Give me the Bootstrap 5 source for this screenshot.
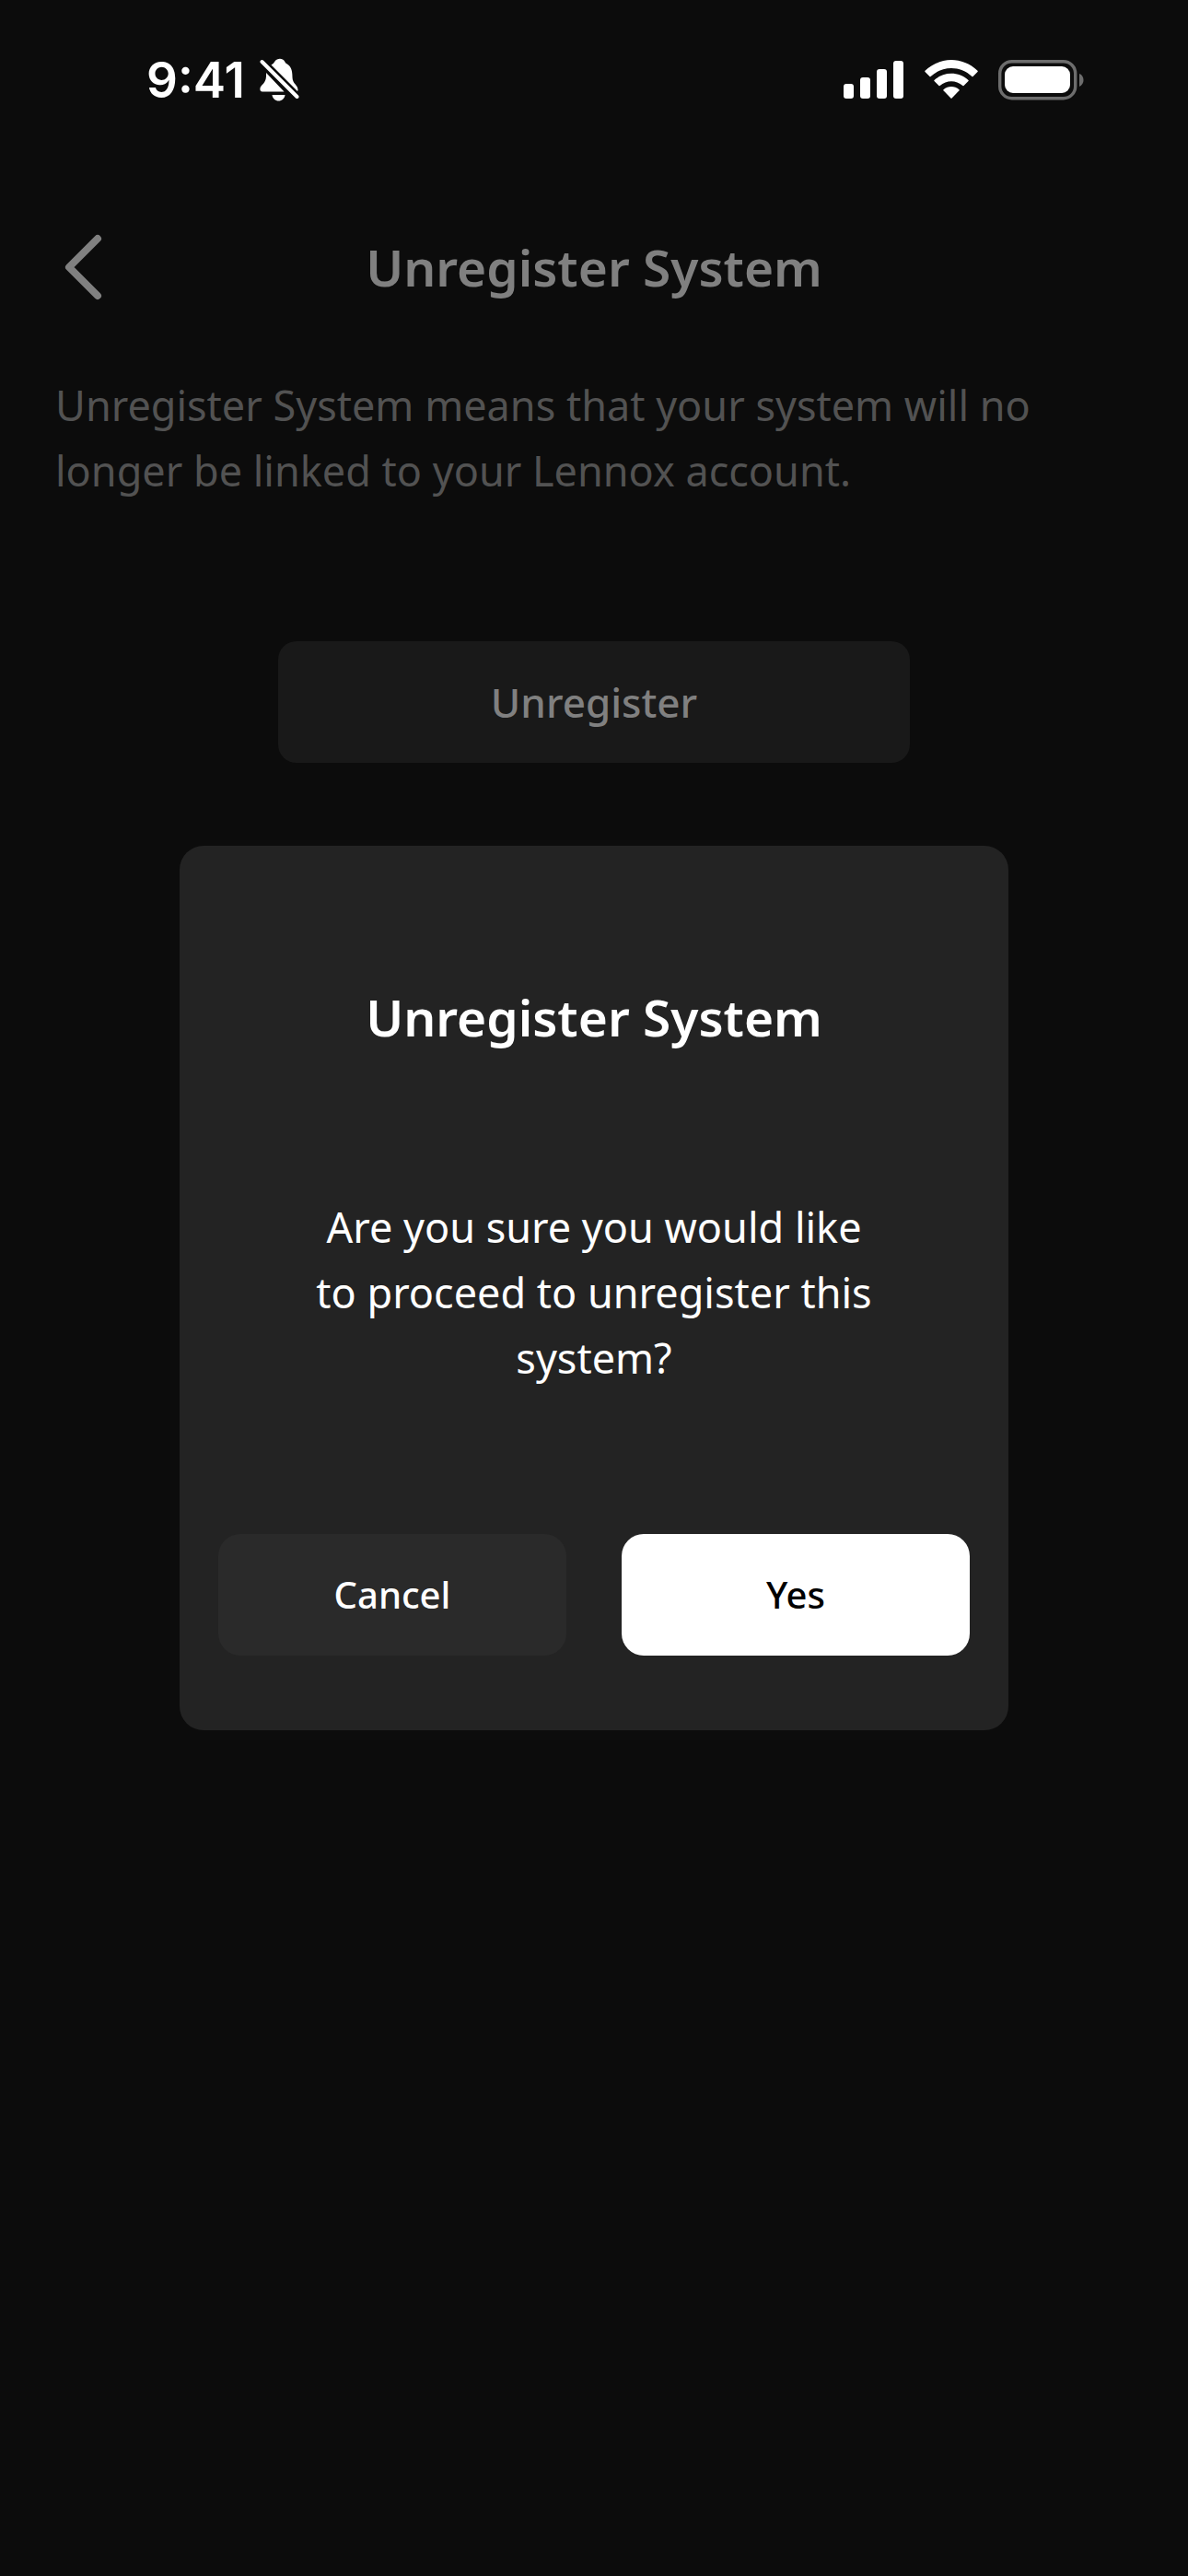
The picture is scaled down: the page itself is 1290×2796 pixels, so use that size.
<!DOCTYPE html>
<html lang="en">
<head>
<meta charset="utf-8">
<meta name="viewport" content="width=device-width, initial-scale=1">
<title>Unregister System</title>
<link href="https://cdn.jsdelivr.net/npm/bootstrap@5.3.0/dist/css/bootstrap.min.css" rel="stylesheet">
<style>
body { background: #0c0c0c; color: #fff; font-family: "Noto Sans", "Open Sans", sans-serif; }
.status-bar { padding: 54px 112px 0 159px; }
.status-time { font: 600 53px/66px Inter, sans-serif; }
.status-icons { gap: 22px; }
.top-bar { padding: 0 60px; margin-top: 110px; height: 120px; grid-template-columns: 60px 1fr 60px; align-items: center; }
.back-link { line-height: 0; padding-left: 9px; }
.screen-title { font-size: 55px; line-height: 72px; font-weight: 600; }
.dimmed { color: #808080; }
.intro { color: #525252; font-size: 45px; line-height: 71px; font-weight: 400; padding: 0 60px; margin: 54px 0 0; }
.action-btn { height: 132px; border: 0; border-radius: 24px; font-size: 40px; font-weight: 500; }
.unregister-btn { width: 686px; max-width: 90%; margin-top: 150px; border-radius: 20px; background: #191919; color: #808080; font-size: 44px; }
.confirm-dialog { max-width: 900px; margin: 0 auto; }
.confirm-panel { background: #232323; color: #fff; border: 0; border-radius: 26px; padding: 150px 42px 81px; }
.confirm-text { font-size: 45px; line-height: 71px; font-weight: 400; padding: 0 100px; margin: 156px 0 156px; }
.confirm-actions { gap: 60px; }
.cancel-btn, .cancel-btn:hover { background: #2a2a2a; color: #fff; }
.yes-btn, .yes-btn:hover { background: #fff; color: #000; }
</style>
<script src="https://cdn.jsdelivr.net/npm/bootstrap@5.3.0/dist/js/bootstrap.bundle.min.js"></script>
</head>
<body>
<header class="status-bar d-flex justify-content-between align-items-center">
  <div class="d-flex align-items-center gap-3">
    <span class="status-time">9:41</span>
    <svg width="44" height="48" viewBox="0 0 44 48" fill="#fff" aria-hidden="true">
      <path d="M12.500 7.500 C14 6.500 15.500 5.500 16.500 3.500 C19-.3 25-.3 27 3.500 C28 5.500 29 6 30.500 7 C35 10 35.500 16 35.500 21 C35.500 28 41.500 29 41.500 34.500 C41.500 35 41.300 35.500 41 36 Z"/>
      <path d="M7 16 L26.500 36.500 H3 C1 36.500 0 35 .5 32.500 C1.300 29 6.500 28 7 20 Z"/>
      <path d="M13.500 40 H27.500 C27 44 24 46.500 20.500 46.500 C17 46.500 14 44 13.500 40 Z"/>
      <path d="M2.500 4 L40 42" stroke="#0c0c0c" stroke-width="8"/>
      <path d="M2.500 4 L40.500 42" stroke="#fff" stroke-width="4" stroke-linecap="round"/>
    </svg>
  </div>
  <div class="status-icons d-flex align-items-center">
    <svg width="66" height="44" viewBox="0 0 66 44" fill="#fff" aria-hidden="true">
      <rect x="0" y="26" width="11" height="16" rx="3"/><rect x="18" y="19" width="11" height="23" rx="3"/><rect x="36" y="10" width="11" height="32" rx="3"/><rect x="54" y="1" width="11" height="41" rx="3"/>
    </svg>
    <svg width="58" height="44" viewBox="0 0 58 44" fill="#fff" aria-hidden="true">
      <path d="M.5 13 Q0 12.500 .5 11.800 C17-3.800 41-3.800 57.500 11.800 Q58 12.500 57.500 13 L52.500 18 Q52 18.500 51.400 18 C39 6 19 6 6.600 18 Q6 18.500 5.500 18 Z"/>
      <path d="M10.500 23 Q10 22.500 10.500 22 C21 12.400 37 12.400 47.500 22 Q48 22.500 47.500 23 L42.500 28 Q42 28.500 41.400 28 C34 21.500 24 21.500 16.600 28 Q16 28.500 15.500 28 Z"/>
      <path d="M20.500 33.300 Q20 32.700 20.500 32.200 C25.500 28 32.500 28 37.500 32.200 Q38 32.700 37.500 33.300 L29.600 41.500 Q29 42 28.400 41.500 Z"/>
    </svg>
    <svg width="94" height="44" viewBox="0 0 94 44" aria-hidden="true">
      <rect x="1.700" y="1.700" width="82" height="40" rx="13" fill="none" stroke="#6d6d6d" stroke-width="3.400"/>
      <rect x="7" y="7" width="71" height="29" rx="9" fill="#fff"/>
      <path d="M88 15 C94 17 94 26.500 88 29 Z" fill="#6d6d6d"/>
    </svg>
  </div>
</header>
<main>
  <div class="top-bar d-grid">
    <a href="#" class="back-link" aria-label="Back">
      <svg width="44" height="72" viewBox="0 0 44 72" fill="none" stroke="#808080" stroke-width="8" stroke-linecap="round" stroke-linejoin="round"><path d="M37 5 L6 36 L37 67"/></svg>
    </a>
    <h1 class="screen-title dimmed text-center mb-0">Unregister System</h1>
  </div>
  <p class="intro">Unregister System means that your system will no longer be linked to your Lennox account.</p>
  <div class="text-center">
    <button type="button" class="btn action-btn unregister-btn">Unregister</button>
  </div>
</main>
<div class="modal d-block" role="dialog" aria-modal="true" aria-labelledby="confirm-title">
  <div class="modal-dialog modal-dialog-centered confirm-dialog min-vh-100">
    <div class="modal-content confirm-panel text-center">
      <h2 id="confirm-title" class="screen-title mb-0">Unregister System</h2>
      <p class="confirm-text">Are you sure you would like to proceed to unregister this system?</p>
      <div class="confirm-actions d-flex">
        <button type="button" class="btn action-btn cancel-btn flex-fill w-50">Cancel</button>
        <button type="button" class="btn action-btn yes-btn flex-fill w-50">Yes</button>
      </div>
    </div>
  </div>
</div>
</body>
</html>
